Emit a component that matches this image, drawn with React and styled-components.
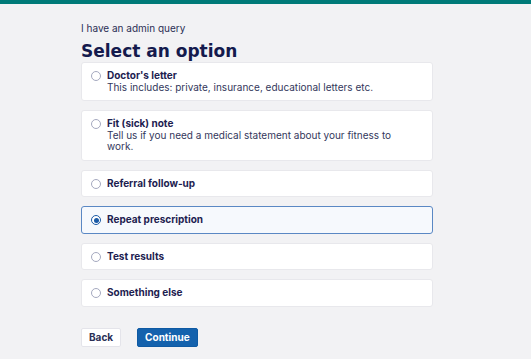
import React from "react";
import styled, { createGlobalStyle } from "styled-components";

const Global = createGlobalStyle`
  html, body { margin: 0; padding: 0; }
  body {
    background: #f2f2f4;
    font-family: Inter, "Noto Sans", "Liberation Sans", sans-serif;
    color: #1d2150;
  }
`;

const TopBar = styled.div`
  height: 4px;
  background: #007a78;
`;

const Main = styled.main`
  width: 352px;
  margin-left: 81px;
  padding-top: 17px;
`;

const Caption = styled.div`
  font-size: 10px;
  line-height: 14px;
  color: #2b2f55;
`;

const Heading = styled.h1`
  margin: 5px 0 0;
  font-family: "DejaVu Sans", Inter, sans-serif;
  font-size: 17px;
  line-height: 22px;
  font-weight: 700;
  color: #141a4d;
`;

const Options = styled.div`
  display: flex;
  flex-direction: column;
  gap: 9px;
`;

const Option = styled.label`
  display: flex;
  align-items: flex-start;
  gap: 6px;
  padding: 7px 24px 7px 9px;
  background: ${(p) => (p.$selected ? "#f6f9fd" : "#ffffff")};
  border: 1px solid ${(p) => (p.$selected ? "#5a88c4" : "#e8e8ec")};
  border-radius: 3px;
  cursor: pointer;
`;

const Radio = styled.span`
  flex: none;
  box-sizing: border-box;
  width: 10px;
  height: 10px;
  margin-top: 1px;
  border-radius: 50%;
  border: 1px solid ${(p) => (p.$checked ? "#1a5aa6" : "#a5a9bf")};
  background: #fff;
  display: flex;
  align-items: center;
  justify-content: center;
  &::after {
    content: "";
    width: 5px;
    height: 5px;
    border-radius: 50%;
    background: ${(p) => (p.$checked ? "#1a5aa6" : "transparent")};
  }
`;

const Text = styled.div`
  display: flex;
  flex-direction: column;
`;

const Label = styled.span`
  font-size: 10px;
  line-height: 11.5px;
  font-weight: 700;
  color: #1d2150;
`;

const Hint = styled.span`
  font-size: 10px;
  line-height: 11.5px;
  color: #33375c;
`;

const Actions = styled.div`
  display: flex;
  gap: 16px;
  margin-top: 21px;
`;

const Button = styled.button`
  height: 19px;
  padding: 0 7px;
  font-family: inherit;
  font-size: 10px;
  font-weight: 700;
  border-radius: 2px;
  border: 1px solid ${(p) => (p.$primary ? "#0f5aa3" : "#e4e4ea")};
  background: ${(p) => (p.$primary ? "#1462ad" : "#ffffff")};
  color: ${(p) => (p.$primary ? "#ffffff" : "#2a2f55")};
  cursor: pointer;
`;

const options = [
  { label: "Doctor's letter", hint: "This includes: private, insurance, educational letters etc." },
  { label: "Fit (sick) note", hint: "Tell us if you need a medical statement about your fitness to work." },
  { label: "Referral follow-up" },
  { label: "Repeat prescription", selected: true },
  { label: "Test results" },
  { label: "Something else" },
];

export default function App() {
  return (
    <>
      <Global />
      <TopBar />
      <Main>
        <Caption>I have an admin query</Caption>
        <Heading>Select an option</Heading>
        <Options>
          {options.map((o) => (
            <Option key={o.label} $selected={o.selected}>
              <Radio $checked={o.selected} />
              <Text>
                <Label>{o.label}</Label>
                {o.hint && <Hint>{o.hint}</Hint>}
              </Text>
            </Option>
          ))}
        </Options>
        <Actions>
          <Button>Back</Button>
          <Button $primary>Continue</Button>
        </Actions>
      </Main>
    </>
  );
}
